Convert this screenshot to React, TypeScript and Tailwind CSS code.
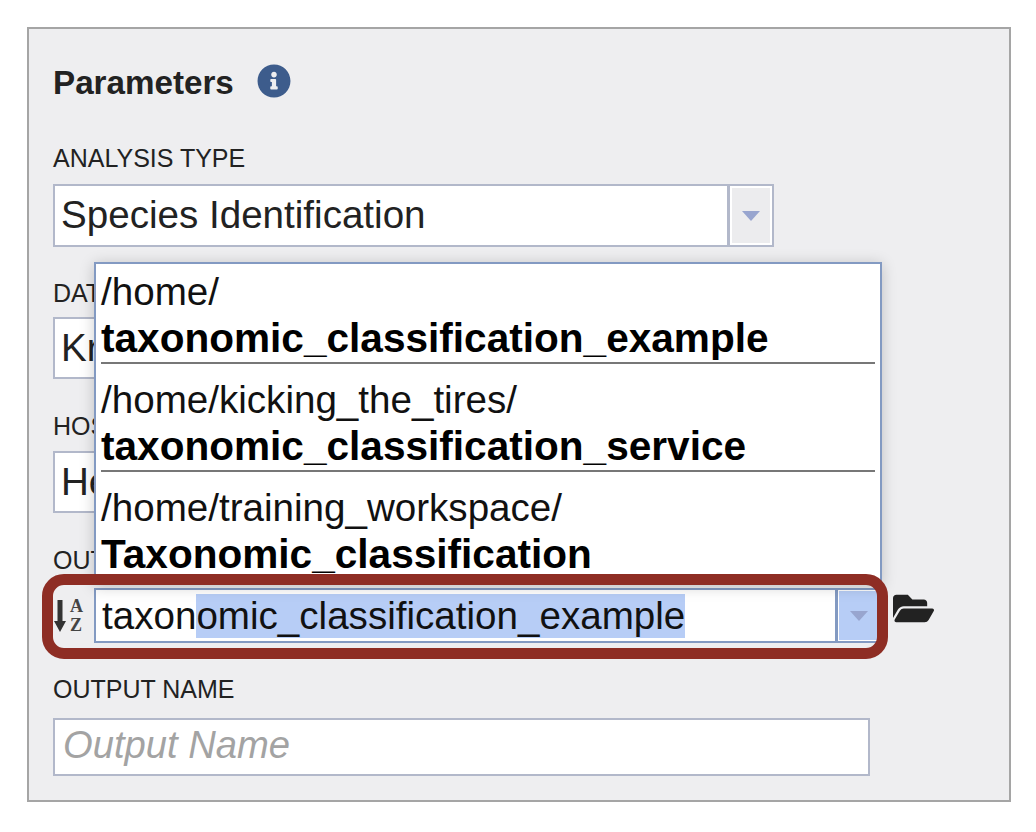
import { FaInfoCircle, FaFolderOpen } from "react-icons/fa";

const font = "font-['Liberation_Sans',Arial,sans-serif]";
const label = "h-[28px] text-[25px] leading-[28px] text-[#222]";

function Arrow({ tone }: { tone: string }) {
  return <span className={`block h-0 w-0 border-x-[9px] border-t-[10px] border-x-transparent ${tone}`} />;
}

function Suggestion({ path, name, last }: { path: string; name: string; last?: boolean }) {
  return (
    <div className={last ? "" : "mb-[13px] border-b-2 border-[#777] pb-[1px]"}>
      <div className="h-[46px] text-[38.6px] leading-[46px] text-[#111]">{path}</div>
      <div className="h-[46px] text-[40.6px] font-bold leading-[46px] text-black">{name}</div>
    </div>
  );
}

function SortIcon() {
  return (
    <div className="flex h-[40px] w-[41px] items-center pl-[1px] text-[#333]">
      <svg viewBox="0 0 12 32" className="h-[32px] w-[12px]" fill="currentColor">
        <path d="M3.5 0h5v21H12L6 32 0 21h3.5z" />
      </svg>
      <div className="ml-[4px] flex flex-col font-['Liberation_Serif',serif] text-[18px] font-bold leading-[19px] text-[#444]">
        <span>A</span>
        <span>Z</span>
      </div>
    </div>
  );
}

export default function App() {
  return (
    <div className={`min-h-[832px] bg-white pl-[27px] pt-[27px] ${font}`}>
      <div className="relative h-[775px] w-[984px] border-2 border-[#a5a5a5] bg-[#eeeef0] pl-[24px] pt-[36px]">
        <div className="flex h-[36px] items-center">
          <span className="text-[33.2px] font-bold text-[#222]">Parameters</span>
          <FaInfoCircle className="mb-[4px] ml-[23px] text-[34px] text-[#3d5c8c]" />
        </div>

        <div className={`mt-[43px] ${label}`}>ANALYSIS TYPE</div>
        <div className="mt-[12px] flex h-[63px] w-[721px] border-2 border-[#b2b8ca] bg-white">
          <div className="flex flex-1 items-center pb-[2px] pl-[6px] text-[38.6px] text-[#222]">Species Identification</div>
          <div className="w-[3px] bg-[#b2b8ca]" />
          <div className="m-[2px] flex w-[38px] items-center justify-center bg-[#ececee]">
            <Arrow tone="border-t-[#98a5cf]" />
          </div>
        </div>

        <div className={`mt-[32px] ${label}`}>DAT</div>
        <div className="mt-[10px] flex h-[62px] w-[721px] items-center border-2 border-[#b2b8ca] bg-white pl-[6px] text-[38.6px] text-[#222]">
          Kr
        </div>

        <div className={`mt-[33px] ${label}`}>HOS</div>
        <div className="mt-[11px] flex h-[62px] w-[721px] items-center border-2 border-[#b2b8ca] bg-white pl-[6px] text-[38.6px] text-[#222]">
          He
        </div>

        <div className={`mt-[33px] ${label}`}>OUT</div>
        <div className="mt-[14px] flex h-[55px] items-center">
          <SortIcon />
          <div className="flex h-[55px] w-[786px] border-2 border-[#839ac2] bg-white">
            <div className="flex flex-1 items-center pl-[6px] text-[38.6px] leading-[44px] text-[#111]">
              <span>taxon</span>
              <span className="bg-[#b7cdf6]">omic_classification_example</span>
            </div>
            <div className="w-[3px] bg-[#839ac2]" />
            <div className="my-[1px] ml-[1px] flex w-[39px] items-center justify-center bg-[#b7cdf6]">
              <Arrow tone="border-t-[#98a5cf]" />
            </div>
          </div>
          <FaFolderOpen className="mb-[15px] ml-[13px] text-[41px] text-[#222]" />
        </div>

        <div className={`mt-[32px] ${label}`}>OUTPUT NAME</div>
        <div className="mt-[15px] flex h-[58px] w-[817px] items-center border-2 border-[#b2b8ca] bg-white pb-[5px] pl-[8px] text-[38.2px] italic text-[#a3a3a3]">
          Output Name
        </div>

        {/* suggestion list lies over the fields */}
        <div className="absolute left-[65px] top-[233px] h-[323px] w-[788px] border-2 border-[#839ac2] bg-white px-[5px] pt-[5px] shadow-[0_2px_14px_rgba(0,0,0,0.2)]">
          <Suggestion path="/home/" name="taxonomic_classification_example" />
          <Suggestion path="/home/kicking_the_tires/" name="taxonomic_classification_service" />
          <Suggestion path="/home/training_workspace/" name="Taxonomic_classification" last />
        </div>

        {/* red callout around the output folder */}
        <div className="absolute left-[13px] top-[545px] h-[85px] w-[846px] rounded-[22px] border-[11px] border-[#8e2d24]" />
      </div>
    </div>
  );
}
